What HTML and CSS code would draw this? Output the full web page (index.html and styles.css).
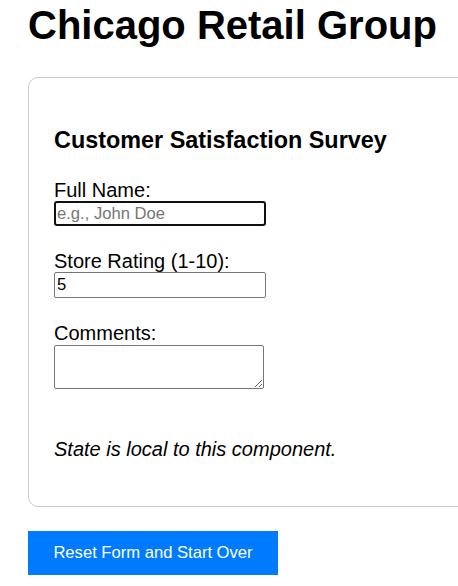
FILE: index.html
```html
<!DOCTYPE html>
<html lang="en">
<head>
<meta charset="utf-8">
<title>Chicago Retail Group</title>
<link rel="stylesheet" href="styles.css">
</head>
<body>
<div class="page">
  <h1 class="title">Chicago Retail Group</h1>
  <section class="card">
    <h3 class="card-title">Customer Satisfaction Survey</h3>
    <div class="field">
      <label class="label" for="name">Full Name:</label>
      <input class="input input-focus" id="name" type="text" placeholder="e.g., John Doe">
    </div>
    <div class="field">
      <label class="label" for="rating">Store Rating (1-10):</label>
      <input class="input" id="rating" type="text" value="5">
    </div>
    <div class="field">
      <label class="label" for="comments">Comments:</label>
      <textarea class="textarea" id="comments"></textarea>
    </div>
    <p class="note">State is local to this component.</p>
  </section>
  <button class="reset" type="button">Reset Form and Start Over</button>
</div>
</body>
</html>
```

FILE: styles.css
```css
html, body {
  margin: 0;
  padding: 0;
  overflow: hidden;
  background: #ffffff;
}

body {
  font-family: "Liberation Sans", Arial, sans-serif;
  color: #000000;
}

.page {
  padding: 2px 0 0 28px;
  display: flex;
  flex-direction: column;
  align-items: flex-start;
}

.title {
  font-size: 40px;
  line-height: 46px;
  font-weight: 700;
  margin: 0 0 29px;
  white-space: nowrap;
}

.card {
  box-sizing: border-box;
  width: 560px;
  border: 1px solid #cccccc;
  border-radius: 10px;
  padding: 25px;
  display: flex;
  flex-direction: column;
  align-items: flex-start;
}

.card-title {
  font-size: 23.4px;
  line-height: 27px;
  font-weight: 700;
  margin: 24px 0 25px;
  white-space: nowrap;
}

.field {
  display: flex;
  flex-direction: column;
  align-items: flex-start;
  margin-bottom: 24px;
}

.label {
  font-size: 20px;
  line-height: 22px;
}

.input {
  box-sizing: border-box;
  width: 212px;
  height: 26px;
  margin: 0;
  padding: 1px 2px;
  border: 1px solid #767676;
  border-radius: 2px;
  font-family: "Liberation Sans", Arial, sans-serif;
  font-size: 16.6px;
  color: #000000;
  background: #ffffff;
}

.input::placeholder {
  color: #757575;
}

.input-focus {
  height: 25px;
  border: 2px solid #101010;
  border-radius: 3px;
  padding: 0 1px;
  outline: none;
}

.textarea {
  box-sizing: border-box;
  width: 210px;
  height: 44px;
  margin: 1px 0 0;
  padding: 2px;
  border: 1px solid #767676;
  border-radius: 2px;
  font-family: "Liberation Mono", monospace;
  font-size: 16px;
  resize: both;
}

.note {
  font-size: 20px;
  line-height: 23px;
  font-style: italic;
  margin: 25px 0 20px;
}

.reset {
  margin-top: 24px;
  width: 250px;
  height: 44px;
  border: none;
  border-radius: 0;
  background: #007bff;
  color: #ffffff;
  font-family: "Liberation Sans", Arial, sans-serif;
  font-size: 16.6px;
  padding: 0 25px;
  white-space: nowrap;
}
```
